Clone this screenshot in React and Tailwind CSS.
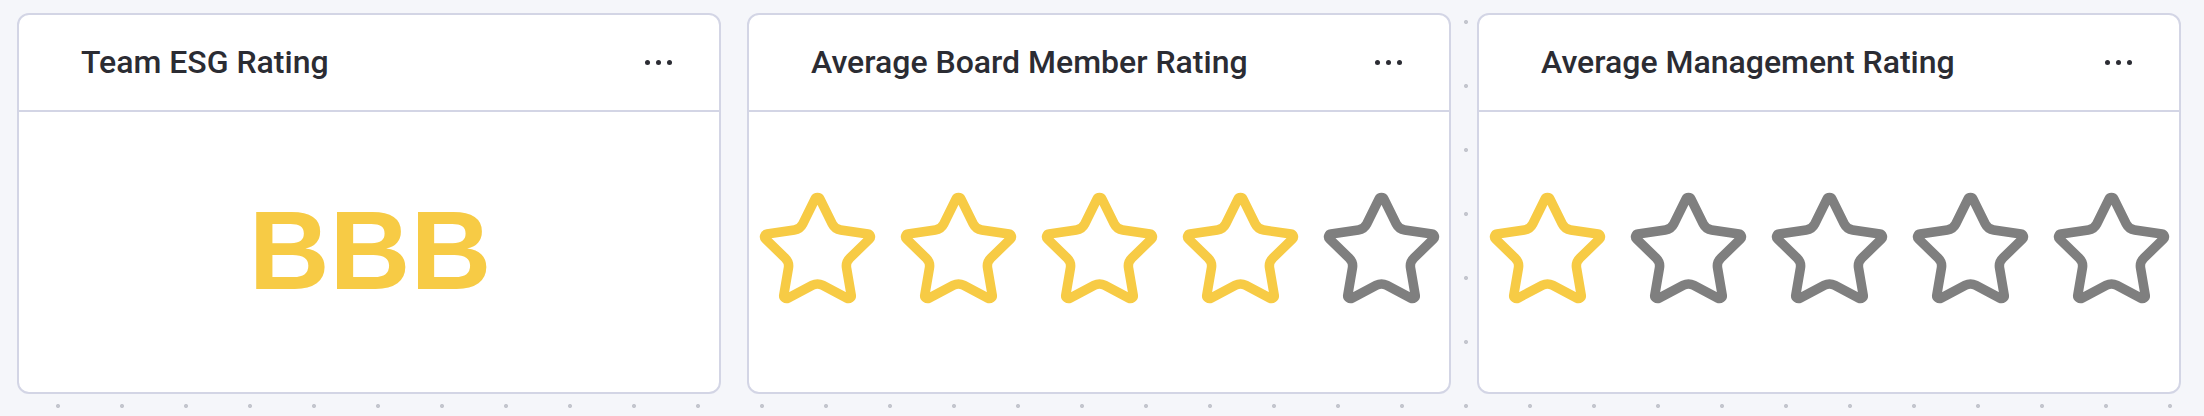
import React from "react";

const YELLOW = "#f7cb45";
const GRAY = "#7f7f7f";

function StarIcon({ color }) {
  return (
    <svg
      width="127"
      height="127"
      viewBox="0 0 24 24"
      fill="none"
      stroke={color}
      strokeWidth="1.8"
      strokeLinecap="round"
      strokeLinejoin="round"
    >
      <path d="M11.525 2.295a.53.53 0 0 1 .95 0l2.31 4.679a2.123 2.123 0 0 0 1.595 1.16l5.166.756a.53.53 0 0 1 .294.904l-3.736 3.638a2.123 2.123 0 0 0-.611 1.878l.882 5.14a.53.53 0 0 1-.771.56l-4.618-2.428a2.122 2.122 0 0 0-1.973 0L6.396 21.01a.53.53 0 0 1-.77-.56l.881-5.139a2.122 2.122 0 0 0-.611-1.879L2.16 9.795a.53.53 0 0 1 .294-.906l5.165-.755a2.122 2.122 0 0 0 1.597-1.16z" />
    </svg>
  );
}

function Stars({ filled }) {
  return (
    <div className="flex items-center gap-[14px] mt-[-3px]">
      {[0, 1, 2, 3, 4].map((i) => (
        <StarIcon key={i} color={i < filled ? YELLOW : GRAY} />
      ))}
    </div>
  );
}

function Card({ title, children }) {
  return (
    <div className="w-[704px] h-[381px] shrink-0 bg-white border-2 border-[#d3d5e5] rounded-[12px] flex flex-col overflow-hidden">
      <div className="h-[97px] shrink-0 border-b-2 border-[#d3d5e5] flex items-center justify-between pl-[62px] pr-[47px]">
        <span className="text-[32px] font-medium text-[#2b2c33] leading-none font-['Roboto',sans-serif] mt-[-2px]">
          {title}
        </span>
        <div className="flex items-center gap-[6px] mt-[-1px]">
          <span className="w-[5px] h-[5px] rounded-full bg-[#2b2c33]" />
          <span className="w-[5px] h-[5px] rounded-full bg-[#2b2c33]" />
          <span className="w-[5px] h-[5px] rounded-full bg-[#2b2c33]" />
        </div>
      </div>
      <div className="flex-1 flex items-center justify-center">{children}</div>
    </div>
  );
}

export default function App() {
  return (
    <div className="w-[2204px] h-[416px] bg-[#f5f6fa] bg-[radial-gradient(circle,#c4c6ce_1.6px,transparent_2.4px)] bg-[length:64px_64px] bg-[position:26px_54px] pt-[13px] pl-[17px] flex gap-[26px]">
      <Card title="Team ESG Rating">
        <span className="text-[112px] font-bold leading-none text-[#f7cb45] font-['Liberation_Sans',Arial,sans-serif] mt-[-2px] ml-[2px]">
          BBB
        </span>
      </Card>
      <Card title="Average Board Member Rating">
        <Stars filled={4} />
      </Card>
      <Card title="Average Management Rating">
        <Stars filled={1} />
      </Card>
    </div>
  );
}
